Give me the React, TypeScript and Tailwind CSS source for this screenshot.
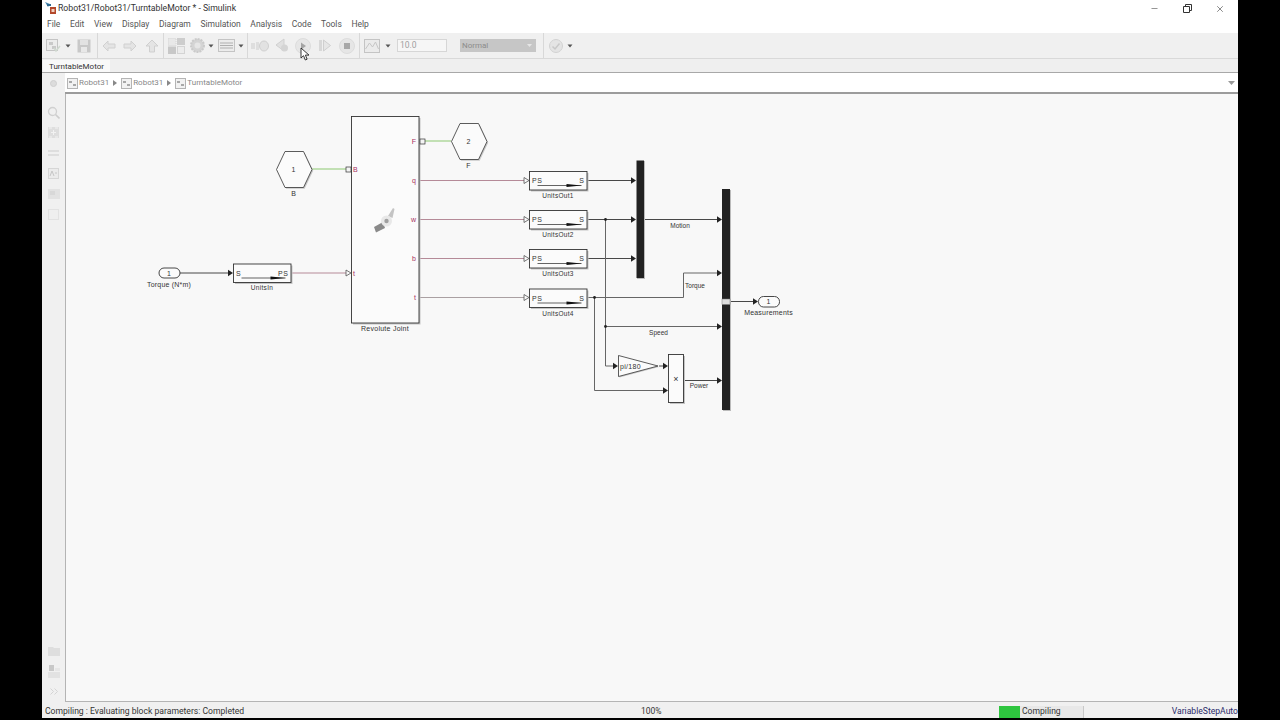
import { Minus, X } from "lucide-react"

const menus = ["File", "Edit", "View", "Display", "Diagram", "Simulation", "Analysis", "Code", "Tools", "Help"]

const Caret = ({ className = "" }: { className?: string }) => (
  <svg width="6" height="4" viewBox="0 0 6 4" className={className}>
    <path d="M0.5 0.5h5L3 3.5z" fill="#555" />
  </svg>
)

const Sep = ({ className = "" }: { className?: string }) => <div className={`w-px h-[25px] bg-[#d8d8d8] ${className}`} />

const Toolbar = () => (
  <div className="relative flex items-center h-[26px] shrink-0 bg-[#f0f0f0] border-b border-[#d9d9d9] pl-[4px]">
    {/* new model */}
    <svg width="15" height="15" viewBox="0 0 15 15">
      <rect x="0.5" y="1.5" width="11" height="11" fill="#ececec" stroke="#c4c4c4" />
      <path d="M3 4h4v3H3zM6 8h4v3H6z" fill="#c9c9c9" />
      <path d="M8 10l2 3 4-5" fill="none" stroke="#cfd8cf" strokeWidth="1.5" />
    </svg>
    <Caret className="ml-[4px]" />
    <svg width="14" height="14" viewBox="0 0 14 14" className="ml-[6px]">
      <rect x="0.5" y="0.5" width="13" height="13" fill="#c8c8c8" />
      <rect x="3" y="1" width="8" height="5" fill="#e2e2e2" />
      <rect x="4" y="8" width="6" height="5" fill="#e8e8e8" />
    </svg>
    <Sep className="ml-[6px]" />
    <svg width="14" height="12" viewBox="0 0 14 12" className="ml-[4px]">
      <path d="M1 6l5-5v3h7v4H6v3z" fill="#e4e4e4" stroke="#d0d0d0" />
    </svg>
    <svg width="14" height="12" viewBox="0 0 14 12" className="ml-[7px]">
      <path d="M13 6L8 1v3H1v4h7v3z" fill="#e4e4e4" stroke="#d0d0d0" />
    </svg>
    <svg width="14" height="14" viewBox="0 0 14 14" className="ml-[8px]">
      <path d="M7 1l6 6H9.5v6h-5V7H1z" fill="#e4e4e4" stroke="#cfcfcf" />
    </svg>
    <Sep className="ml-[4px]" />
    <svg width="17" height="16" viewBox="0 0 17 16" className="ml-[4px]">
      <rect x="0.5" y="0.5" width="7.5" height="7" fill="#e8e8e8" stroke="#d4d4d4" strokeDasharray="1 1" />
      <rect x="9" y="0" width="8" height="7" fill="#cdcdcd" />
      <rect x="0" y="8.5" width="8" height="7.5" fill="#c8c8c8" />
      <rect x="9.5" y="8.5" width="7" height="7" fill="#ececec" stroke="#d4d4d4" />
    </svg>
    <svg width="15" height="15" viewBox="0 0 15 15" className="ml-[5px]">
      <circle cx="7.5" cy="7.5" r="6.5" fill="#d4d4d4" stroke="#cacaca" strokeWidth="2" strokeDasharray="2 1" />
      <circle cx="7.5" cy="7.5" r="3" fill="#e6e6e6" />
    </svg>
    <Caret className="ml-[3px]" />
    <svg width="17" height="13" viewBox="0 0 17 13" className="ml-[4px]">
      <rect x="0.5" y="0.5" width="16" height="12" fill="#ececec" stroke="#c4c4c4" />
      <path d="M2 4h13M2 6.5h13M2 9h13" stroke="#b0b0b0" />
    </svg>
    <Caret className="ml-[3px]" />
    <Sep className="ml-[3px]" />
    <svg width="19" height="12" viewBox="0 0 19 12" className="ml-[2px]">
      <path d="M1 3h4v6H1zM6 2h3v8H6z" fill="#dedede" />
      <ellipse cx="14" cy="6" rx="4.5" ry="5" fill="#e2e2e2" stroke="#cfcfcf" />
    </svg>
    <svg width="14" height="15" viewBox="0 0 14 15" className="ml-[6px]">
      <path d="M9 1v12L1 7z" fill="#e0e0e0" stroke="#d0d0d0" />
      <circle cx="9.5" cy="10" r="3.5" fill="#d4d4d4" />
    </svg>
    <svg width="16" height="16" viewBox="0 0 16 16" className="ml-[6px]">
      <circle cx="8" cy="8" r="7.5" fill="#e6e6e6" stroke="#dcdcdc" />
      <path d="M6 4.5v7l5-3.5z" fill="#a4a4a4" />
    </svg>
    <svg width="12" height="13" viewBox="0 0 12 13" className="ml-[8px]">
      <rect x="0" y="1" width="3" height="11" fill="#d8d8d8" />
      <path d="M4.5 1v11L11.5 6.5z" fill="#e6e6e6" stroke="#cfcfcf" />
    </svg>
    <svg width="16" height="16" viewBox="0 0 16 16" className="ml-[8px]">
      <circle cx="8" cy="8" r="7.5" fill="#e6e6e6" stroke="#dcdcdc" />
      <rect x="5" y="5" width="6" height="6" fill="#a8a8a8" />
    </svg>
    <Sep className="ml-[4px]" />
    <svg width="16" height="14" viewBox="0 0 16 14" className="ml-[4px]">
      <rect x="0.5" y="0.5" width="15" height="13" fill="#ebebeb" stroke="#c4c4c4" />
      <path d="M1.5 10l4-6 3 4 3-5 3 7" fill="none" stroke="#c6c6c6" />
    </svg>
    <Caret className="ml-[5px]" />
    <div className="ml-[6px] w-[50px] h-[13px] bg-[#f6f6f6] border border-[#d6d6d6] pl-[2px] text-[8.5px] leading-[11px] text-[#a0a0a0]">10.0</div>
    <div className="ml-[13px] w-[76px] h-[13px] bg-[#c6c6c6] flex items-center justify-between pl-[2px] pr-[4px] text-[8px] leading-[11px] text-[#8c8c8c]">
      Normal
      <svg width="5" height="3" viewBox="0 0 5 3"><path d="M0 0h5L2.5 3z" fill="#e6e6e6" /></svg>
    </div>
    <Sep className="ml-[7px]" />
    <svg width="14" height="14" viewBox="0 0 14 14" className="ml-[5px]">
      <circle cx="7" cy="7" r="6.5" fill="#e4e4e4" stroke="#d2d2d2" />
      <path d="M3.5 7.5l2.5 2.5 4.5-5.5" fill="none" stroke="#c8c8c8" strokeWidth="1.5" />
    </svg>
    <Caret className="ml-[4px]" />
    {/* mouse pointer sitting over the run button */}
    <svg width="10" height="14" viewBox="0 0 10 14" className="absolute left-[258px] top-[14px]">
      <path d="M1 1v10l2.5-2.3L5.3 13l1.8-.8-1.7-4.1H9z" fill="#fff" stroke="#222" strokeWidth="0.9" />
    </svg>
  </div>
)

const Crumb = ({ name, arrow = true, gap = "" }: { name: string; arrow?: boolean; gap?: string }) => (
  <>
    <svg width="11" height="11" viewBox="0 0 11 11" className={`shrink-0 ${gap}`}>
      <rect x="0.5" y="0.5" width="10" height="10" fill="#f2f2f2" stroke="#b4b4b4" />
      <path d="M2 3h3v2H2zM6 6h3v2H6z" fill="#a8a8a8" />
    </svg>
    <span className="ml-[1px]">{name}</span>
    {arrow && (
      <svg width="4" height="6" viewBox="0 0 4 6" className="ml-[4px]">
        <path d="M0 0l4 3-4 3z" fill="#888" />
      </svg>
    )}
  </>
)

const sideIcons = (
  <div className="grid auto-rows-[20.4px] place-items-center pt-[8px]">
    <svg width="13" height="13" viewBox="0 0 13 13">
      <circle cx="5.5" cy="5.5" r="4" fill="#f0f0f0" stroke="#d0d0d0" strokeWidth="1.3" />
      <path d="M8.5 8.5l4 4" stroke="#cdcdcd" strokeWidth="1.6" />
    </svg>
    <svg width="11" height="11" viewBox="0 0 11 11">
      <rect width="11" height="11" fill="#dedede" />
      <path d="M1 1h3M7 1h3M1 10h3M7 10h3M5.5 3v5M3 5.5h5" stroke="#f2f2f2" />
    </svg>
    <svg width="11" height="10" viewBox="0 0 11 10">
      <path d="M0 3h11M0 7h11" stroke="#d8d8d8" strokeWidth="1.4" />
    </svg>
    <svg width="11" height="11" viewBox="0 0 11 11">
      <rect x="0.5" y="0.5" width="10" height="10" fill="#ebebeb" stroke="#d6d6d6" />
      <path d="M2 8l2-5 2 5M7 5h2" fill="none" stroke="#c6c6c6" />
    </svg>
    <svg width="12" height="10" viewBox="0 0 12 10">
      <rect width="12" height="10" fill="#e2e2e2" />
      <rect x="2" y="2" width="5" height="4" fill="#d8d8d8" />
    </svg>
    <svg width="11" height="11" viewBox="0 0 11 11">
      <rect x="0.5" y="0.5" width="10" height="10" fill="#efefef" stroke="#e2e2e2" />
    </svg>
  </div>
)

const sideBottom = (
  <div className="grid auto-rows-[20.5px] place-items-center">
    <svg width="12" height="10" viewBox="0 0 12 10">
      <path d="M0 1h5l1 1h6v8H0z" fill="#dedede" />
    </svg>
    <svg width="12" height="13" viewBox="0 0 12 13">
      <rect x="1" y="0" width="5" height="6" fill="#c8c8c8" />
      <rect x="0" y="7" width="12" height="6" fill="#e2e2e2" />
      <rect x="7" y="3" width="5" height="3" fill="#e6e6e6" />
    </svg>
    <svg width="8" height="7" viewBox="0 0 8 7">
      <path d="M0.5 0.5L3.5 3.5 0.5 6.5M4.5 0.5L7.5 3.5 4.5 6.5" fill="none" stroke="#d4d4d4" />
    </svg>
  </div>
)

// small text used on the diagram
const T = ({ x, y, c = "#333", s = 7, a = "middle", ls = 0, children }: { x: number; y: number; c?: string; s?: number; a?: "middle" | "start" | "end"; ls?: number; children: string }) => (
  <text x={x} y={y} fill={c} fontSize={s} textAnchor={a} letterSpacing={ls} fontFamily="'Liberation Sans', sans-serif">
    {children}
  </text>
)

const Head = ({ x, y }: { x: number; y: number }) => <path d={`M${x - 5} ${y - 3.2}L${x} ${y}L${x - 5} ${y + 3.2}z`} fill="#222" />
const Open = ({ x, y }: { x: number; y: number }) => <path d={`M${x - 5} ${y - 3}L${x} ${y}L${x - 5} ${y + 3}z`} fill="#f8f8f8" stroke="#555" strokeWidth="0.8" />

const Box = ({ x, y, w, h }: { x: number; y: number; w: number; h: number }) => (
  <>
    <rect x={x + 1.5} y={y + 1.5} width={w} height={h} fill="#c4c4c4" />
    <rect x={x} y={y} width={w} height={h} fill="#fbfbfb" stroke="#333" strokeWidth="0.9" />
  </>
)

const Converter = ({ x, y, label, left, right, labelY }: { x: number; y: number; label: string; left: string; right: string; labelY: number }) => (
  <>
    <Box x={x} y={y - 9} w={57.5} h={18.5} />
    <path d={`M${x + 8} ${y + 5}h44`} stroke="#222" strokeWidth="0.7" />
    <path d={`M${x + 37} ${y + 3.4}L${x + 52} ${y + 5}L${x + 37} ${y + 6.6}z`} fill="#111" />
    <T x={x + 2.5} y={y + 2.5} a="start" ls={0.6}>{left}</T>
    <T x={x + 55} y={y + 2.5} a="end" ls={0.6}>{right}</T>
    <T x={x + 28.5} y={labelY} ls={0.3} s={6.5}>{label}</T>
  </>
)

const Dot = ({ x, y }: { x: number; y: number }) => <circle cx={x} cy={y} r="1.4" fill="#222" />

const pink = "#a8305f"
const mauve = "#b58a98"

const Diagram = () => (
  <svg width="1172" height="608" viewBox="66 94 1172 608" className="block">
    {/* physical connections */}
    <path d="M312 169H346M425 141H451" stroke="#8cc870" strokeWidth="1.2" fill="none" />
    <path d="M291 273H346M419 180.5H524M419 219.5H524M419 258.5H524" stroke={mauve} strokeWidth="1.1" fill="none" />
    <path d="M419 297.5H524" stroke="#aaa0a2" strokeWidth="1" fill="none" />

    {/* signal lines */}
    <path d="M180 273H228M587 180.5H632M587 219.5H632M587 258.5H632M644 219.5H718M684 380.5H718M731 301.5H754M659 366H664" stroke="#333" strokeWidth="0.9" fill="none" />
    <path d="M587 297.5H683.5V273H718M594.5 297.5V390.5H664M605.5 219.5V366H614M605.5 326.5H718" stroke="#666" strokeWidth="1" fill="none" />
    <Dot x={605.5} y={219.5} />
    <Dot x={594.5} y={297.5} />
    <Dot x={605.5} y={326.5} />
    {[[233, 273], [636, 180.5], [636, 219.5], [636, 258.5], [722, 219.5], [722, 273], [722, 326.5], [722, 380.5], [758, 301.5], [618, 366], [668, 366], [668, 390.5]].map(([x, y]) => (
      <Head key={`${x}-${y}`} x={x} y={y} />
    ))}

    {/* revolute joint */}
    <Box x={351.5} y={116.5} w={67.5} h={206.5} />
    <rect x="346" y="167" width="5" height="5" fill="#f4f4f4" stroke="#333" strokeWidth="0.7" />
    <rect x="420" y="139" width="5" height="5" fill="#f4f4f4" stroke="#333" strokeWidth="0.7" />
    <Open x={351} y={273} />
    <T x={353} y={172} c={pink} a="start">B</T>
    <T x={353} y={275.5} c={pink} a="start">t</T>
    <T x={416} y={143.5} c={pink} a="end">F</T>
    <T x={416} y={183} c={pink} a="end">q</T>
    <T x={416} y={222} c={pink} a="end">w</T>
    <T x={416} y={261} c={pink} a="end">b</T>
    <T x={416} y={300} c={pink} a="end">t</T>
    <T x={385} y={331} ls={0.25}>Revolute Joint</T>
    <path d="M374 227l9-5 2 6-9 4.5z" fill="#8a8a8a" />
    <path d="M388 216l5-8 1.5 1-2 9z" fill="#c4c4c4" />
    <circle cx="386.5" cy="221" r="5.5" fill="#e8e8e8" />
    <circle cx="386.5" cy="221" r="2.2" fill="#a0a0a0" />

    {/* connection ports */}
    <path d="M276.5 169.5L285 151.5H303.5L312 169.5L303.5 187.5H285z" fill="#c8c8c8" transform="translate(1.2 1.2)" />
    <path d="M276.5 169.5L285 151.5H303.5L312 169.5L303.5 187.5H285z" fill="#fbfbfb" stroke="#333" strokeWidth="0.8" />
    <T x={293.5} y={172}>1</T>
    <T x={293.5} y={195.5}>B</T>
    <path d="M451.5 141.5L460 123.5H478.5L487 141.5L478.5 159.5H460z" fill="#c8c8c8" transform="translate(1.2 1.2)" />
    <path d="M451.5 141.5L460 123.5H478.5L487 141.5L478.5 159.5H460z" fill="#fbfbfb" stroke="#333" strokeWidth="0.8" />
    <T x={468.5} y={144}>2</T>
    <T x={468.5} y={167.5}>F</T>

    {/* in / out ports */}
    <rect x="159" y="268" width="21" height="10" rx="5" fill="#fbfbfb" stroke="#333" strokeWidth="0.9" />
    <T x={169} y={275.5}>1</T>
    <T x={169} y={287} ls={0.2}>Torque (N*m)</T>
    <rect x="758.5" y="296.5" width="21" height="10.5" rx="5" fill="#fbfbfb" stroke="#333" strokeWidth="0.9" />
    <T x={768.5} y={304}>1</T>
    <T x={768.5} y={315} ls={0.2}>Measurements</T>

    {/* converters */}
    <Converter x={233.5} y={273} label="UnitsIn" left="S" right="PS" labelY={290} />
    <Converter x={529.5} y={180.5} label="UnitsOut1" left="PS" right="S" labelY={197.5} />
    <Converter x={529.5} y={219.5} label="UnitsOut2" left="PS" right="S" labelY={236.5} />
    <Converter x={529.5} y={258.5} label="UnitsOut3" left="PS" right="S" labelY={276} />
    <Converter x={529.5} y={298} label="UnitsOut4" left="PS" right="S" labelY={315.5} />
    <Open x={529} y={180.5} />
    <Open x={529} y={219.5} />
    <Open x={529} y={258.5} />
    <Open x={529} y={297.5} />

    {/* mux and bus */}
    <rect x="637" y="161" width="8" height="118" fill="#bbb" />
    <rect x="636.5" y="160.5" width="7.5" height="117.5" fill="#222" />
    <rect x="723" y="190" width="8" height="221" fill="#bbb" />
    <rect x="722" y="189" width="8" height="221" fill="#222" />
    <rect x="722" y="299" width="8" height="5.5" fill="#ddd" stroke="#777" strokeWidth="0.5" />
    <T x={680} y={227.5} s={6.5}>Motion</T>
    <T x={695} y={287.5} s={6.5}>Torque</T>
    <T x={658.5} y={334.5} s={6.5}>Speed</T>
    <T x={699} y={388} s={6.5}>Power</T>

    {/* gain + product */}
    <path d="M618.5 355.5L658 366L618.5 376.5z" fill="#c8c8c8" transform="translate(1 1)" />
    <path d="M618.5 355.5L658 366L618.5 376.5z" fill="#fbfbfb" stroke="#333" strokeWidth="0.8" />
    <T x={620} y={368.5} a="start" ls={0.3}>pi/180</T>
    <Box x={668.5} y={354.5} w={15} h={48} />
    <T x={676} y={381.5} s={9}>×</T>
  </svg>
)

export default function App() {
  return (
    <div className="w-[1280px] h-[720px] bg-black overflow-hidden">
      <div className="ml-[42px] w-[1196px] h-[718px] bg-white flex flex-col font-['Roboto',sans-serif]">
        {/* title bar */}
        <div className="flex items-center h-[16px] shrink-0 pt-px text-[8.7px] text-[#333]">
          <svg width="13" height="13" viewBox="0 0 13 13" className="ml-[2px]">
            <path d="M1 0l5 2-2 3z" fill="#4b88b0" />
            <path d="M3 2h4v2H3z" fill="#2f6b92" />
            <rect x="6" y="5" width="6" height="7" fill="#b3472a" />
            <rect x="7.5" y="7" width="3" height="3" fill="#f0d0c0" />
          </svg>
          <span className="ml-[1px]">Robot31/Robot31/TurntableMotor * - Simulink</span>
          <div className="ml-auto flex items-center text-[#444]">
            <Minus size={9} strokeWidth={1.5} />
            <svg width="9" height="9" viewBox="0 0 9 9" className="ml-[24px]">
              <path d="M0.5 2.5h6v6h-6zM2.5 2.5v-2h6v6h-2" fill="none" stroke="#333" />
            </svg>
            <X size={10} strokeWidth={1.5} className="ml-[23px] mr-[13px]" />
          </div>
        </div>
        {/* menu */}
        <div className="flex items-center gap-[9.6px] h-[17px] shrink-0 pl-[5px] text-[8.5px] text-[#555]">
          {menus.map((m) => (
            <span key={m}>{m}</span>
          ))}
        </div>
        <Toolbar />
        {/* tabs */}
        <div className="flex items-end h-[14px] shrink-0 bg-[#efefef] border-b border-[#a8a8a8]">
          <div className="ml-px w-[67px] h-[12px] bg-[#f9f9f9] text-center text-[8px] leading-[13px] text-[#333]">TurntableMotor</div>
        </div>
        {/* breadcrumb */}
        <div className="flex h-[21px] shrink-0">
          <div className="w-[23px] bg-[#f0f0f0] flex items-center justify-center">
            <div className="w-[7px] h-[7px] rounded-full bg-[#dcdcdc] border border-[#cfcfcf]" />
          </div>
          <div className="flex-1 flex items-center bg-white border-b-2 border-[#9c9c9c] pl-[2px] pt-px text-[8px] text-[#888]">
            <Crumb name="Robot31" />
            <Crumb name="Robot31" gap="ml-[4px]" />
            <Crumb name="TurntableMotor" arrow={false} gap="ml-[4px]" />
            <svg width="7" height="4" viewBox="0 0 7 4" className="ml-auto mr-[3px]">
              <path d="M0 0h7L3.5 4z" fill="#999" />
            </svg>
          </div>
        </div>
        {/* body */}
        <div className="flex flex-1 min-h-0">
          <div className="w-[23px] bg-[#f0f0f0] flex flex-col justify-between">
            {sideIcons}
            {sideBottom}
          </div>
          <div className="flex-1 bg-[#f8f8f8] border-l border-b border-[#b4b4b4] overflow-hidden">
            <Diagram />
          </div>
        </div>
        {/* status bar */}
        <div className="flex items-center h-[16px] shrink-0 pt-[3px] bg-[#f0f0f0] text-[8.6px] text-[#333]">
          <span className="ml-[3px] w-[596px] shrink-0 truncate">Compiling : Evaluating block parameters: Completed</span>
          <span className="w-[22px] text-[8.5px]">100%</span>
          <div className="ml-[336px] flex items-center h-[12px] w-[85px] bg-[#e8e8e8] border-r border-[#c8c8c8]">
            <div className="w-[21px] h-[12px] bg-[#2ec53f]" />
            <span className="ml-[2px]">Compiling</span>
          </div>
          <span className="ml-auto text-[#2a2a6a] whitespace-nowrap">VariableStepAuto</span>
        </div>
      </div>
    </div>
  )
}
